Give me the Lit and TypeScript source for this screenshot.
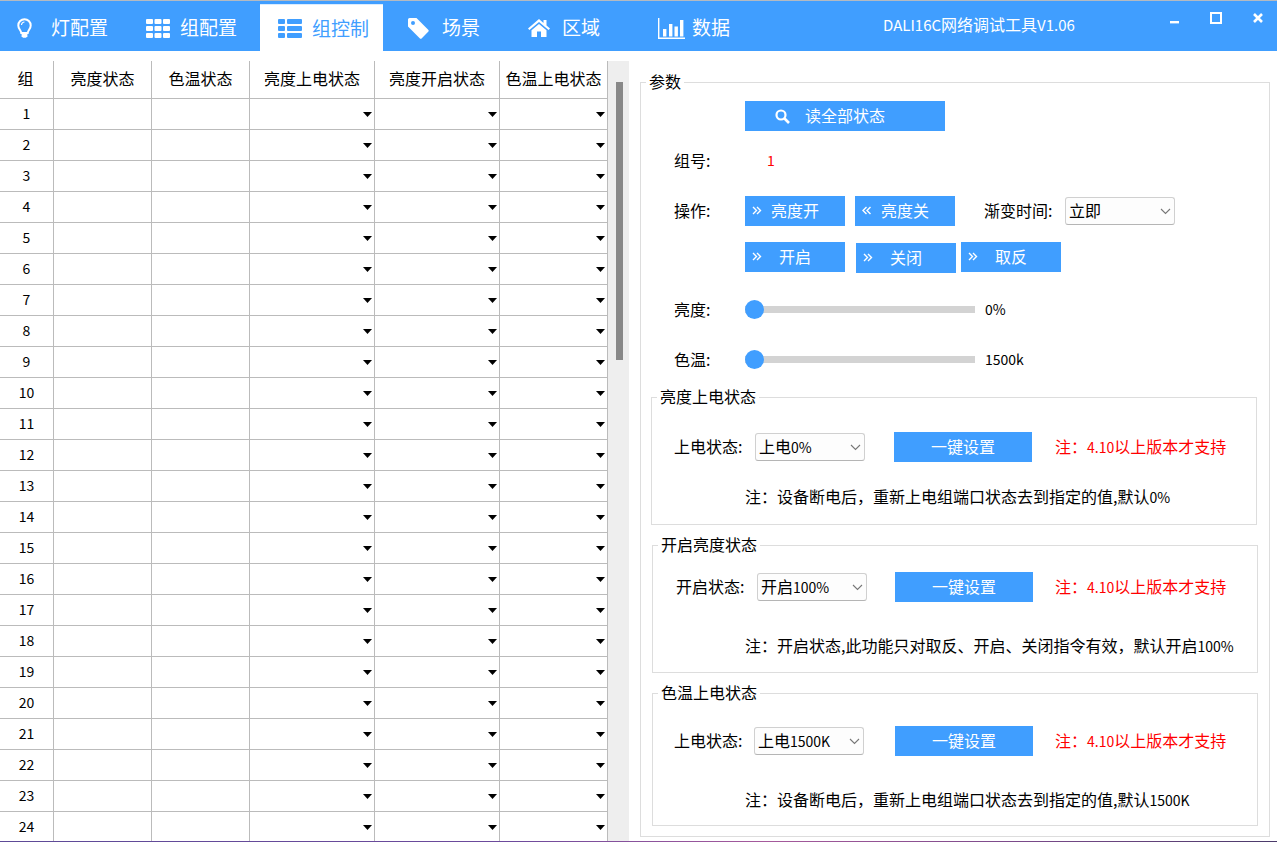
import { LitElement, html, css, svg } from "lit";
import { customElement } from "lit/decorators.js";

const chevR = svg`<path d="M1 1l3.500 3.500L1 8M5 1l3.500 3.500L5 8" fill="none" stroke="#fff" stroke-width="1.400"/>`;
const chevL = svg`<path d="M4.500 1L1 4.500 4.500 8M8.500 1L5 4.500 8.500 8" fill="none" stroke="#fff" stroke-width="1.400"/>`;

const tabs = [
  { cls: "t1", label: "灯配置", w: 15, h: 20, icon: svg`<path d="M7.500 1.200a6.200 6.200 0 0 0-6.200 6.200c0 3.600 2.700 4.600 3 7.600h6.400c.3-3 3-4 3-7.600a6.200 6.200 0 0 0-6.200-6.200z" fill="none" stroke="#fff" stroke-width="2"/><path d="M4.500 7a3 3 0 0 1 3-3" fill="none" stroke="#fff" stroke-width="1.200"/><path d="M4.600 16h5.800v2.200l-1.400 1.500H6l-1.400-1.500z" fill="#fff"/>` },
  { cls: "t2", label: "组配置", w: 24, h: 19, icon: svg`<g fill="#fff"><rect x="0" y="0" width="7" height="5" rx="1"/><rect x="8.500" y="0" width="7" height="5" rx="1"/><rect x="17" y="0" width="7" height="5" rx="1"/><rect x="0" y="7" width="7" height="5" rx="1"/><rect x="8.500" y="7" width="7" height="5" rx="1"/><rect x="17" y="7" width="7" height="5" rx="1"/><rect x="0" y="14" width="7" height="5" rx="1"/><rect x="8.500" y="14" width="7" height="5" rx="1"/><rect x="17" y="14" width="7" height="5" rx="1"/></g>` },
  { cls: "t3 active", label: "组控制", w: 24, h: 19, icon: svg`<g fill="#409eff"><rect x="0" y="0" width="7" height="5" rx="1"/><rect x="9" y="0" width="15" height="5" rx="1"/><rect x="0" y="7" width="7" height="5" rx="1"/><rect x="9" y="7" width="15" height="5" rx="1"/><rect x="0" y="14" width="7" height="5" rx="1"/><rect x="9" y="14" width="15" height="5" rx="1"/></g>` },
  { cls: "t4", label: "场景", w: 21, h: 21, icon: svg`<path fill="#fff" fill-rule="evenodd" d="M0 1.500A1.500 1.500 0 0 1 1.500 0h7l11.700 11.700a1.500 1.500 0 0 1 0 2.100l-6.400 6.400a1.500 1.500 0 0 1-2.100 0L0 8.500zM5 3a2 2 0 1 0 0 4 2 2 0 0 0 0-4z"/>` },
  { cls: "t5", label: "区域", w: 22, h: 18, icon: svg`<path fill="#fff" d="M11 0L0 9.500l1.400 1.600L11 3l9.600 8.100L22 9.500 18.500 6.500V1h-3v3z"/><path fill="#fff" d="M11 5l7.500 6.300V18H13v-5.500H9V18H3.500v-6.700z"/>` },
  { cls: "t6", label: "数据", w: 27, h: 21, icon: svg`<path d="M.7 0v20.300H27" fill="none" stroke="#fff" stroke-width="1.400"/><g fill="#fff"><rect x="5" y="11" width="3.400" height="7.500"/><rect x="11" y="6" width="3.400" height="12.500"/><rect x="16.500" y="8.500" width="3.400" height="10"/><rect x="22" y="2" width="3.400" height="16.500"/></g>` },
];

const columns = ["组", "亮度状态", "色温状态", "亮度上电状态", "亮度开启状态", "色温上电状态"];
const groupRows = Array.from({ length: 24 }, (_, i) => i + 1);

const sections = [
  { cls: "g1", title: "亮度上电状态", label: "上电状态:", value: "上电0%", note: "注：设备断电后，重新上电组端口状态去到指定的值,默认0%" },
  { cls: "g2", title: "开启亮度状态", label: "开启状态:", value: "开启100%", note: "注：开启状态,此功能只对取反、开启、关闭指令有效，默认开启100%" },
  { cls: "g3", title: "色温上电状态", label: "上电状态:", value: "上电1500K", note: "注：设备断电后，重新上电组端口状态去到指定的值,默认1500K" },
];

/** Latin runs are set smaller than the CJK around them, as in the reference. */
const runs = (text: string) =>
  text.split(/([A-Za-z0-9.%]+)/).map((part, i) => (i % 2 ? html`<span class="lat">${part}</span>` : part));

@customElement("app-root")
export class AppRoot extends LitElement {
  static styles = css`
    :host {
      display: block;
      width: 1277px;
      height: 842px;
      overflow: hidden;
      background: #fff;
      color: #000;
      font-family: "Noto Sans CJK SC", "Noto Sans", sans-serif;
      font-size: 16px;
      line-height: 24px;
    }
    * { box-sizing: border-box; }
    .lat { font-size: 14px; }

    .header {
      height: 51px;
      background: #409eff;
      border-top: 1px solid #b4bac2;
      display: flex;
      color: #fff;
    }
    .tab {
      display: flex;
      align-items: center;
      font-size: 19px;
      height: 50px;
      padding-top: 4px;
    }
    .tab span { margin-bottom: 2px; }
    .tab svg { flex: none; display: block; }
    .t1 { width: 130px; padding-left: 17px; gap: 19px; }
    .t2 { width: 130px; padding-left: 16px; gap: 10px; }
    .t3 { width: 123px; padding-left: 18px; gap: 10px; }
    .t4 { width: 130px; padding-left: 25px; gap: 13px; }
    .t5 { width: 130px; padding-left: 15px; gap: 12px; }
    .t6 { width: 107px; padding-left: 15px; gap: 7px; }
    .tab.active {
      background: #fff;
      color: #409eff;
      height: 47px;
      margin-top: 3px;
      padding-top: 1px;
      border-top: 1px solid #d9ecff;
    }
    .title {
      margin-left: 133px;
      line-height: 50px;
      height: 50px;
      margin-top: -2px;
      white-space: nowrap;
    }
    .title .lat { font-size: 15px; }
    .win {
      margin-left: auto;
      display: flex;
      align-items: flex-start;
      padding: 11px 14px 0 0;
    }
    .win svg { display: block; }
    .w-min { margin-top: 9px; }
    .w-max { margin-left: 31px; }
    .w-close { margin-left: 31px; margin-top: 1px; }

    .main {
      height: 790px;
      overflow: hidden;
      display: flex;
      align-items: flex-start;
    }
    .left {
      flex: none;
      width: 629px;
      height: 780px;
      margin-top: 10px;
      display: flex;
      overflow: hidden;
    }
    .table {
      flex: none;
      width: 608px;
      display: grid;
      grid-template-columns: 54px 98px 98px 125px 125px 108px;
      grid-template-rows: 38px;
      grid-auto-rows: 31px;
      align-content: start;
    }
    .cell {
      border-right: 1px solid #bbb;
      border-bottom: 1px solid #bbb;
      display: flex;
      align-items: center;
      justify-content: center;
    }
    .head { height: 38px; padding-bottom: 3px; white-space: nowrap; }
    .head:first-child { padding-right: 2px; }
    .num { font-size: 14px; padding-bottom: 2px; }
    .drop { justify-content: flex-end; padding-right: 2px; }
    .drop svg { display: block; }
    .scroll {
      flex: none;
      width: 21px;
      height: 100%;
      background: #eee;
      padding: 21px 0 0 8px;
    }
    .thumb { width: 7px; height: 278px; background: #888; }

    .params {
      flex: none;
      position: relative;
      width: 630px;
      height: 755px;
      margin: 31px 0 0 11px;
      border: 1px solid #ddd;
    }
    .legend {
      position: absolute;
      top: -14px;
      left: 5px;
      padding: 0 3px;
      background: #fff;
      white-space: nowrap;
    }
    .row { display: flex; align-items: center; white-space: nowrap; }
    .lab { flex: none; width: 104px; padding-left: 33px; margin-bottom: 2px; }
    .btn {
      flex: none;
      height: 30px;
      width: 100px;
      padding-bottom: 2px;
      background: #409eff;
      color: #fff;
      display: flex;
      align-items: center;
    }
    .btn svg { display: block; flex: none; }
    .r-read { margin-top: 18px; padding-left: 104px; }
    .b-read { width: 200px; padding-left: 30px; gap: 15px; }
    .b-read svg { margin-top: 2px; }
    .r-num { margin-top: 15px; height: 30px; }
    .red { color: #f00; margin-bottom: 2px; }
    .r-num .red { margin-left: 22px; font-size: 14px; }
    .r-ops { margin-top: 20px; height: 30px; }
    .b-ops { padding-left: 7px; gap: 9px; margin-right: 10px; }
    .fade { margin: 0 0 2px 19px; width: 81px; }
    .r-ops2 { margin-top: 16px; padding-left: 104px; align-items: flex-start; }
    .b-w { padding-left: 7px; gap: 17px; }
    .b-close { margin: 1px 5px 0 11px; }
    .r-sl { height: 19px; }
    .r-sl1 { margin-top: 27px; }
    .r-sl2 { margin-top: 31px; }
    .slider {
      flex: none;
      width: 230px;
      height: 7px;
      background: #d3d3d3;
      display: flex;
      align-items: center;
    }
    .knob { width: 19px; height: 19px; border-radius: 50%; background: #409eff; }
    .val { margin: 0 0 2px 10px; font-size: 14px; }

    .select {
      flex: none;
      width: 110px;
      height: 28px;
      padding: 0 3px 0 3px;
      display: flex;
      align-items: center;
      justify-content: space-between;
      background: #fdfdfd;
      border: 1px solid #d0d0d0;
      border-bottom-color: #b5b5b5;
      border-radius: 3px;
    }
    .select span.txt { margin-bottom: 2px; }
    .select svg { display: block; }

    .group {
      position: relative;
      width: 606px;
      border: 1px solid #ddd;
    }
    .group .legend { left: 5px; padding: 0 3px; }
    .gbtn { width: 138px; justify-content: center; }
    .gnote { color: #f00; margin-bottom: 2px; }
    .g-row { height: 30px; }
    .g-lab { flex: none; margin-bottom: 2px; }
    .g1 { margin: 28px 0 0 10px; height: 128px; }
    .g2 { margin: 20px 0 0 11px; height: 128px; }
    .g3 { margin: 20px 0 0 11px; height: 133px; }
    .g1 .g-row { margin-top: 34px; padding-left: 22px; }
    .g2 .g-row { margin-top: 26px; padding-left: 23px; }
    .g3 .g-row { margin-top: 32px; padding-left: 21px; }
    .g1 .g-lab { width: 81px; }
    .g2 .g-lab { width: 81px; }
    .g3 .g-lab { width: 80px; }
    .g1 .gbtn { margin-left: 29px; }
    .g2 .gbtn { margin-left: 28px; }
    .g3 .gbtn { margin-left: 31px; }
    .gnote { margin-left: 23px; }
    .g2 .gnote, .g3 .gnote { margin-left: 22px; }
    .note { white-space: nowrap; }
    .g1 .note { margin-top: 22px; padding-left: 93px; }
    .g2 .note { margin-top: 31px; padding-left: 92px; }
    .g3 .note { margin-top: 31px; padding-left: 92px; }

    .strip {
      height: 1px;
      background: linear-gradient(90deg, #5d4a97, #6c4a9c 40%, #a65a9c 60%, #7a4a8a 80%, #4a3a6a);
    }
  `;

  private chev(left = false) {
    return html`<svg width="10" height="9" viewBox="0 0 10 9">${left ? chevL : chevR}</svg>`;
  }

  private select(value: string) {
    return html`<div class="select"><span class="txt">${runs(value)}</span>
      <svg width="11" height="7" viewBox="0 0 11 7"><path d="M1 1l4.500 4.500L10 1" fill="none" stroke="#777" stroke-width="1.100"/></svg></div>`;
  }

  render() {
    return html`
      <div class="header">
        ${tabs.map(t => html`<div class="tab ${t.cls}">
          <svg width=${t.w} height=${t.h} viewBox="0 0 ${t.w} ${t.h}">${t.icon}</svg><span>${t.label}</span></div>`)}
        <div class="title">${runs("DALI16C网络调试工具V1.06")}</div>
        <div class="win">
          <svg class="w-min" width="9" height="3" viewBox="0 0 9 3"><rect width="9" height="2.400" fill="#fff"/></svg>
          <svg class="w-max" width="12" height="12" viewBox="0 0 12 12"><rect x="1" y="1" width="10" height="10" fill="none" stroke="#fff" stroke-width="2"/></svg>
          <svg class="w-close" width="10" height="10" viewBox="0 0 10 10"><path d="M1 1l8 8M9 1L1 9" stroke="#fff" stroke-width="2.600"/></svg>
        </div>
      </div>
      <div class="main">
        <div class="left">
          <div class="table">
            ${columns.map(c => html`<div class="cell head">${c}</div>`)}
            ${groupRows.map(n => html`
              <div class="cell num">${n}</div>
              <div class="cell"></div>
              <div class="cell"></div>
              ${[0, 1, 2].map(() => html`<div class="cell drop"><svg width="9" height="5" viewBox="0 0 9 5"><path d="M0 0h9L4.500 5z" fill="#000"/></svg></div>`)}
            `)}
          </div>
          <div class="scroll"><div class="thumb"></div></div>
        </div>
        <div class="params">
          <div class="legend">参数</div>
          <div class="row r-read">
            <div class="btn b-read">
              <svg width="15" height="15" viewBox="0 0 15 15"><circle cx="6" cy="6" r="4.500" fill="none" stroke="#fff" stroke-width="2.200"/><path d="M9.500 9.500L14 14" stroke="#fff" stroke-width="2.600"/></svg>
              <span>读全部状态</span>
            </div>
          </div>
          <div class="row r-num"><div class="lab">组号:</div><span class="red">1</span></div>
          <div class="row r-ops">
            <div class="lab">操作:</div>
            <div class="btn b-ops">${this.chev()}<span>亮度开</span></div>
            <div class="btn b-ops">${this.chev(true)}<span>亮度关</span></div>
            <div class="fade">渐变时间:</div>
            ${this.select("立即")}
          </div>
          <div class="row r-ops2">
            <div class="btn b-w">${this.chev()}<span>开启</span></div>
            <div class="btn b-w b-close">${this.chev()}<span>关闭</span></div>
            <div class="btn b-w">${this.chev()}<span>取反</span></div>
          </div>
          <div class="row r-sl r-sl1"><div class="lab">亮度:</div><div class="slider"><div class="knob"></div></div><span class="val">0%</span></div>
          <div class="row r-sl r-sl2"><div class="lab">色温:</div><div class="slider"><div class="knob"></div></div><span class="val">1500k</span></div>
          ${sections.map(s => html`
            <div class="group ${s.cls}">
              <div class="legend">${s.title}</div>
              <div class="row g-row">
                <div class="g-lab">${s.label}</div>
                ${this.select(s.value)}
                <div class="btn gbtn">一键设置</div>
                <div class="gnote">${runs("注：4.10以上版本才支持")}</div>
              </div>
              <div class="note">${runs(s.note)}</div>
            </div>`)}
        </div>
      </div>
      <div class="strip"></div>
    `;
  }
}
